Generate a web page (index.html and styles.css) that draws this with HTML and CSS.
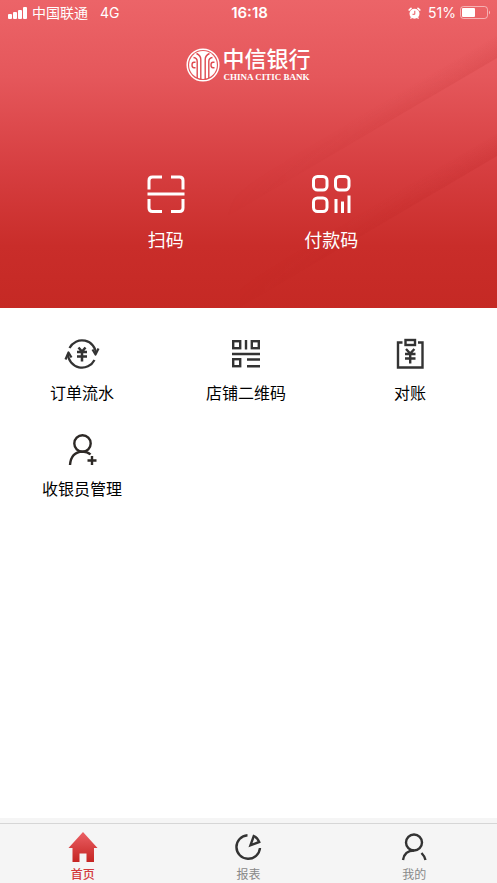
FILE: index.html
```html
<!DOCTYPE html>
<html lang="zh-CN">
<head>
<meta charset="utf-8">
<meta name="viewport" content="width=device-width, initial-scale=1">
<title>中信银行</title>
<link rel="stylesheet" href="styles.css">
</head>
<body>
<div class="app">
  <header class="hero">
    <svg class="hero-shade" viewBox="0 0 497 308" preserveAspectRatio="none" aria-hidden="true">
      <defs>
        <linearGradient id="shadeA" gradientUnits="userSpaceOnUse" x1="487" y1="41" x2="497" y2="58">
          <stop offset="0" stop-color="#b01818" stop-opacity="0"/><stop offset="1" stop-color="#b01818" stop-opacity=".12"/>
        </linearGradient>
        <linearGradient id="shadeB" gradientUnits="userSpaceOnUse" x1="487" y1="139" x2="497" y2="156">
          <stop offset="0" stop-color="#b01818" stop-opacity="0"/><stop offset="1" stop-color="#b01818" stop-opacity=".14"/>
        </linearGradient>
        <linearGradient id="fade" x1="0" y1="0" x2="1" y2="0">
          <stop offset="0.450" stop-color="#000"/><stop offset="0.950" stop-color="#fff"/>
        </linearGradient>
        <mask id="fadeMask" maskUnits="userSpaceOnUse" x="0" y="0" width="497" height="308"><rect width="497" height="308" fill="url(#fade)"/></mask>
      </defs>
      <g mask="url(#fadeMask)">
        <path d="M497 34V58L180 244V220Z" fill="url(#shadeA)"/>
        <path d="M497 132V156L240 307V283Z" fill="url(#shadeB)"/>
      </g>
    </svg>
    <div class="status">
      <div class="status-side">
        <svg width="20" height="12" viewBox="0 0 20 12" fill="#fff" aria-hidden="true"><rect x="0" y="7" width="4" height="5" rx="1"/><rect x="5" y="5" width="4" height="7" rx="1"/><rect x="10" y="3" width="4" height="9" rx="1"/><rect x="15" y="0" width="4" height="12" rx="1"/></svg>
        <span>中国联通</span>
        <span class="network">4G</span>
      </div>
      <time class="clock">16:18</time>
      <div class="status-side status-right">
        <svg class="alarm" width="13" height="13" viewBox="0 0 13 13" aria-hidden="true"><circle cx="6.500" cy="6.800" r="5" fill="#fff"/><path d="M1.200 3 3 1.300M11.800 3 10 1.300" stroke="#fff" stroke-width="1.700" stroke-linecap="round"/><path d="M3.500 10.500l-1 1.200M9.500 10.500l1 1.200" stroke="#fff" stroke-width="1.200"/><path d="M6.800 3.800v3.500H4.500" fill="none" stroke="#e9595e"/></svg>
        <span>51%</span>
        <svg width="31" height="14" viewBox="0 0 31 14" aria-hidden="true"><rect x=".5" y=".5" width="27" height="12" rx="3" fill="none" stroke="#fff" stroke-opacity=".5"/><rect x="2" y="2" width="13" height="9" rx="1" fill="#fff"/><path d="M29 4.500q2 2 0 4Z" fill="#fff" opacity=".6"/></svg>
      </div>
    </div>
    <div class="brand">
      <svg width="34" height="34" viewBox="0 0 34 34" aria-hidden="true">
        <circle cx="17" cy="17" r="15.800" fill="none" stroke="#fff" stroke-width="1.500"/>
        <circle cx="17" cy="17" r="13.900" fill="#fff"/>
        <g fill="none" stroke="#df4a50" stroke-width="1.400">
          <path d="M10.500 5.500C13.500 7 14.800 8.500 14.800 11.500V31M23.500 5.500C20.500 7 19.200 8.500 19.200 11.500V31"/>
          <path d="M7.500 9.500Q11.200 10 11.200 13.500V30M26.500 9.500Q22.800 10 22.800 13.500V30"/>
          <path d="M9.500 14.300H8Q6 14.300 6 17t2 2.700h1.500M28.500 14.300H27Q25 14.300 25 17t2 2.700h1.500"/>
        </g>
      </svg>
      <h1 class="brand-name"><span class="brand-cn">中信银行</span><span class="brand-en">CHINA CITIC BANK</span></h1>
    </div>
    <div class="primary">
      <button type="button" class="primary-item">
        <svg width="40" height="40" viewBox="0 0 40 40" fill="none" stroke="#fff" stroke-width="3" aria-hidden="true"><path d="M3 15.500V6.500Q3 3 6.500 3H16M25 3h8.500Q37 3 37 6.500v9M3 25v9q0 3.500 3.500 3.500H16M25 37.500h8.500Q37 37.500 37 34v-9M1.500 20h37"/></svg>
        <span>扫码</span>
      </button>
      <button type="button" class="primary-item">
        <svg width="40" height="40" viewBox="0 0 40 40" fill="none" stroke="#fff" stroke-width="3" aria-hidden="true"><rect x="2.500" y="2.500" width="13.500" height="13.500" rx="4"/><rect x="24.500" y="2.500" width="13.500" height="13.500" rx="4"/><rect x="2.500" y="24" width="13.500" height="13.500" rx="4"/><path d="M25 25v14M31.500 27.500V39M38 21.500V39"/></svg>
        <span>付款码</span>
      </button>
    </div>
  </header>

  <main class="services">
    <button type="button" class="service">
      <svg width="36" height="36" viewBox="0 0 36 36" fill="none" stroke="#333" stroke-width="2.200" aria-hidden="true"><path d="M5.500 12A14 14 0 0 1 32 18M30.500 24A14 14 0 0 1 4 18"/><path d="M28.500 13.500 31.500 18.500 34.500 12.500M1.500 23.500 4.500 16.500 7.500 21.500" stroke-linejoin="round"/><path d="M14.500 11.500l3.500 4 3.500-4M13 16h10M13 20.500h10M18 15.500v10" stroke-width="2.500"/></svg>
      <span>订单流水</span>
    </button>
    <button type="button" class="service">
      <svg width="36" height="36" viewBox="0 0 36 36" fill="none" stroke="#333" stroke-width="2.400" aria-hidden="true"><rect x="5.200" y="5.200" width="7" height="7"/><rect x="23.800" y="5.200" width="7" height="7"/><path d="M18 4v9.500M4 18h28M19 23.500h13M19 30.200h13"/><rect x="5.200" y="23.200" width="7" height="7"/></svg>
      <span>店铺二维码</span>
    </button>
    <button type="button" class="service">
      <svg width="36" height="36" viewBox="0 0 36 36" fill="none" stroke="#333" stroke-width="2.400" aria-hidden="true"><path d="M10.500 6.500H6V31.500h24.500V6.500H26"/><rect x="13.500" y="4" width="9.500" height="5"/><path d="M14 13l4.200 4.500 4.200-4.500M13 18h10.500M13 22.500h10.500M18.200 17.500v10"/></svg>
      <span>对账</span>
    </button>
    <button type="button" class="service">
      <svg width="36" height="36" viewBox="0 0 36 36" fill="none" stroke="#2d2926" stroke-width="2.400" aria-hidden="true"><circle cx="18.500" cy="11.500" r="8.200"/><path d="M6 33Q7 20 18.500 19.600 23.500 19.600 26.500 22.500"/><path d="M23.500 28.500h9M28 24v9"/></svg>
      <span>收银员管理</span>
    </button>
  </main>

  <nav class="tabs" aria-label="主导航">
    <a class="tab tab-active" href="#home" aria-current="page">
      <svg width="32" height="32" viewBox="0 0 32 32" aria-hidden="true"><defs><linearGradient id="homeFill" x1="0" y1="0" x2="0" y2="1"><stop offset="0" stop-color="#eb6065"/><stop offset="1" stop-color="#c52522"/></linearGradient></defs><path d="M16 1 30.500 17H27V31H19.500V22.500H12.500V31H5.500V17H1.500Z" fill="url(#homeFill)"/></svg>
      <span>首页</span>
    </a>
    <a class="tab" href="#reports">
      <svg width="32" height="32" viewBox="0 0 32 32" fill="none" stroke="#333" stroke-width="2.400" aria-hidden="true"><path d="M15.500 4.200A11.800 11.800 0 1 0 28 17"/><path d="M21.800 5 18.500 14.200 27.200 11Q25.500 6.500 21.800 5Z"/></svg>
      <span>报表</span>
    </a>
    <a class="tab" href="#me">
      <svg width="32" height="32" viewBox="0 0 32 32" fill="none" stroke="#333" stroke-width="2.400" aria-hidden="true"><circle cx="16" cy="11.500" r="8"/><path d="M5 29Q6.500 19.500 16 19.500M23.500 22Q26.500 25 27.500 29"/></svg>
      <span>我的</span>
    </a>
  </nav>
</div>
</body>
</html>
```
FILE: styles.css
```css
* { box-sizing: border-box; }

body {
  margin: 0;
  background: #fff;
  color: #000;
  font-family: "Liberation Sans", "Noto Sans CJK SC", sans-serif;
}

svg { display: block; flex: none; }

button {
  border: 0;
  padding: 0;
  background: none;
  color: inherit;
  font: inherit;
  cursor: pointer;
}

.app {
  display: flex;
  flex-direction: column;
  min-height: 100vh;
}

.hero {
  position: relative;
  padding-bottom: 54px;
  background: linear-gradient(#ec6468 0%, #e5575b 25%, #d63e40 55%, #c92d2a 80%, #c52924 100%);
  color: #fff;
}

.hero-shade {
  position: absolute;
  inset: 0;
  width: 100%;
  height: 100%;
}

.status,
.brand,
.primary { position: relative; }

.status {
  display: grid;
  grid-template-columns: 1fr auto 1fr;
  align-items: center;
  height: 26px;
  padding: 0 6px 0 8px;
  font-family: Inter, "Noto Sans CJK SC", sans-serif;
  font-size: 14px;
  line-height: 20px;
}

.status-side {
  display: flex;
  align-items: center;
  gap: 4px;
}

.status-right { justify-content: flex-end; }

.network { margin-left: 8px; }
.alarm { margin-right: 3px; }

.clock {
  font-size: 15px;
  font-weight: 600;
}

.brand {
  display: flex;
  justify-content: center;
  align-items: center;
  gap: 2px;
  height: 36px;
  margin-top: 21px;
}

.brand-name {
  display: flex;
  flex-direction: column;
  margin: 0;
  font-weight: 500;
}

.brand-cn {
  font-size: 22px;
  line-height: 24px;
}

.brand-en {
  font: bold 9px/10px "Liberation Serif", serif;
  text-align: center;
}

.primary {
  display: grid;
  grid-template-columns: 1fr 1fr;
  width: 66.66%;
  margin: 91px auto 0;
}

.primary-item {
  display: flex;
  flex-direction: column;
  align-items: center;
  gap: 14px;
  font-size: 18px;
  line-height: 26px;
}

.services {
  display: grid;
  grid-template-columns: repeat(3, 1fr);
  align-content: start;
  row-gap: 26px;
  flex: 1;
  padding: 28px 5px 24px 0;
}

.service {
  display: flex;
  flex-direction: column;
  align-items: center;
  gap: 10px;
  font-size: 16px;
  line-height: 24px;
}

.tabs {
  display: grid;
  grid-template-columns: repeat(3, 1fr);
  border-top: 5px solid #f5f5f5;
  background: #f5f5f5;
  box-shadow: inset 0 1px #d6d6d6;
}

.tab {
  display: flex;
  flex-direction: column;
  align-items: center;
  gap: 4px;
  padding-top: 8px;
  color: #888;
  font-size: 12px;
  line-height: 16px;
  text-decoration: none;
}

.tab-active {
  color: #d3393b;
  font-weight: 500;
}
```
